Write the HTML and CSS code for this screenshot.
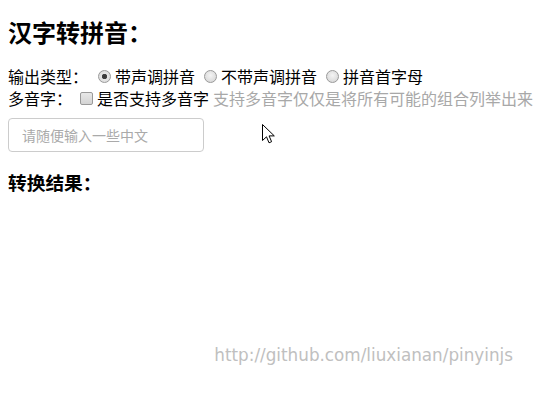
FILE: index.html
```html
<!DOCTYPE html>
<html lang="zh-CN">
<head>
<meta charset="utf-8">
<title>汉字转拼音</title>
<link rel="stylesheet" href="styles.css">
</head>
<body>
<main class="page">
  <h2 class="title">汉字转拼音：</h2>
  <div class="row">
    <span class="label">输出类型：</span>
    <label class="opt first"><input type="radio" name="type" class="radio" checked><span>带声调拼音</span></label>
    <label class="opt"><input type="radio" name="type" class="radio"><span>不带声调拼音</span></label>
    <label class="opt"><input type="radio" name="type" class="radio"><span>拼音首字母</span></label>
  </div>
  <div class="row">
    <span class="label short">多音字：</span>
    <label class="opt check"><input type="checkbox" class="checkbox"><span>是否支持多音字</span></label>
    <span class="tip">支持多音字仅仅是将所有可能的组合列举出来</span>
  </div>
  <input type="text" class="text-input" placeholder="请随便输入一些中文">
  <h3 class="result-title">转换结果：</h3>
  <div class="result"></div>
</main>
<footer class="footer">http://github.com/liuxianan/pinyinjs</footer>
<svg class="cursor" width="14" height="21" viewBox="0 0 14 21" aria-hidden="true">
  <path d="M0.5 0.5 L0.5 16.5 L4.5 12.8 L7 18.8 L9.6 17.7 L7.1 11.9 L12.3 11.9 Z" fill="#fff" stroke="#000" stroke-width="1" stroke-linejoin="miter"/>
</svg>
</body>
</html>
```

FILE: styles.css
```css
html, body {
  height: 100%;
}
body {
  margin: 0;
  display: flex;
  flex-direction: column;
  font-family: "Noto Sans CJK SC", "DejaVu Sans", sans-serif;
  color: #000;
  background: #fff;
  position: relative;
}
.page {
  padding: 16px 8px 0;
}
.title {
  margin: 0;
  font-size: 24px;
  line-height: 32px;
  font-weight: bold;
}
.row {
  display: flex;
  align-items: center;
  font-size: 16px;
  line-height: 22px;
  white-space: nowrap;
}
.row > * {
  flex-shrink: 0;
}
.title + .row {
  margin-top: 17px;
}
.label {
  width: 80px;
}
.label.short {
  width: 72px;
}
.opt {
  display: inline-flex;
  align-items: center;
  margin-left: 9px;
}
.opt.first {
  margin-left: 10px;
}
.radio {
  appearance: none;
  -webkit-appearance: none;
  width: 13px;
  height: 13px;
  margin: 0 4px 0 0;
  border: 1px solid #9a9a9a;
  border-radius: 50%;
  background: radial-gradient(circle at 50% 40%, #f4f4f4 0%, #dcdcdc 70%, #cfcfcf 100%);
  box-sizing: border-box;
}
.radio:checked {
  background: radial-gradient(circle, #333 0, #444 2.4px, #e6e6e6 3px, #d6d6d6 100%);
}
.opt.check {
  margin-left: 0;
}
.checkbox {
  appearance: none;
  -webkit-appearance: none;
  width: 13px;
  height: 13px;
  margin: 0 4px 0 0;
  border: 1px solid #9a9a9a;
  border-radius: 2px;
  background: linear-gradient(#e8e8e8, #d4d4d4);
  box-sizing: border-box;
}
.tip {
  margin-left: 4px;
  color: #a8a8a8;
}
.text-input {
  display: block;
  margin-top: 9px;
  width: 196px;
  height: 34px;
  box-sizing: border-box;
  border: 1px solid #cccccc;
  border-radius: 4px;
  padding: 0 13px;
  font-family: "Noto Sans CJK SC", sans-serif;
  font-size: 14px;
  color: #333;
  outline: none;
}
.text-input::placeholder {
  color: #aaaaaa;
}
.result-title {
  margin: 18px 0 0;
  font-size: 18.72px;
  line-height: 24px;
  font-weight: bold;
}
.footer {
  margin-top: auto;
  align-self: flex-end;
  margin-right: 24px;
  margin-bottom: 30px;
  font-family: "DejaVu Sans", sans-serif;
  font-size: 16.8px;
  line-height: 19px;
  color: #c0c0c0;
}
.cursor {
  position: absolute;
  left: 262px;
  top: 124px;
}
```
